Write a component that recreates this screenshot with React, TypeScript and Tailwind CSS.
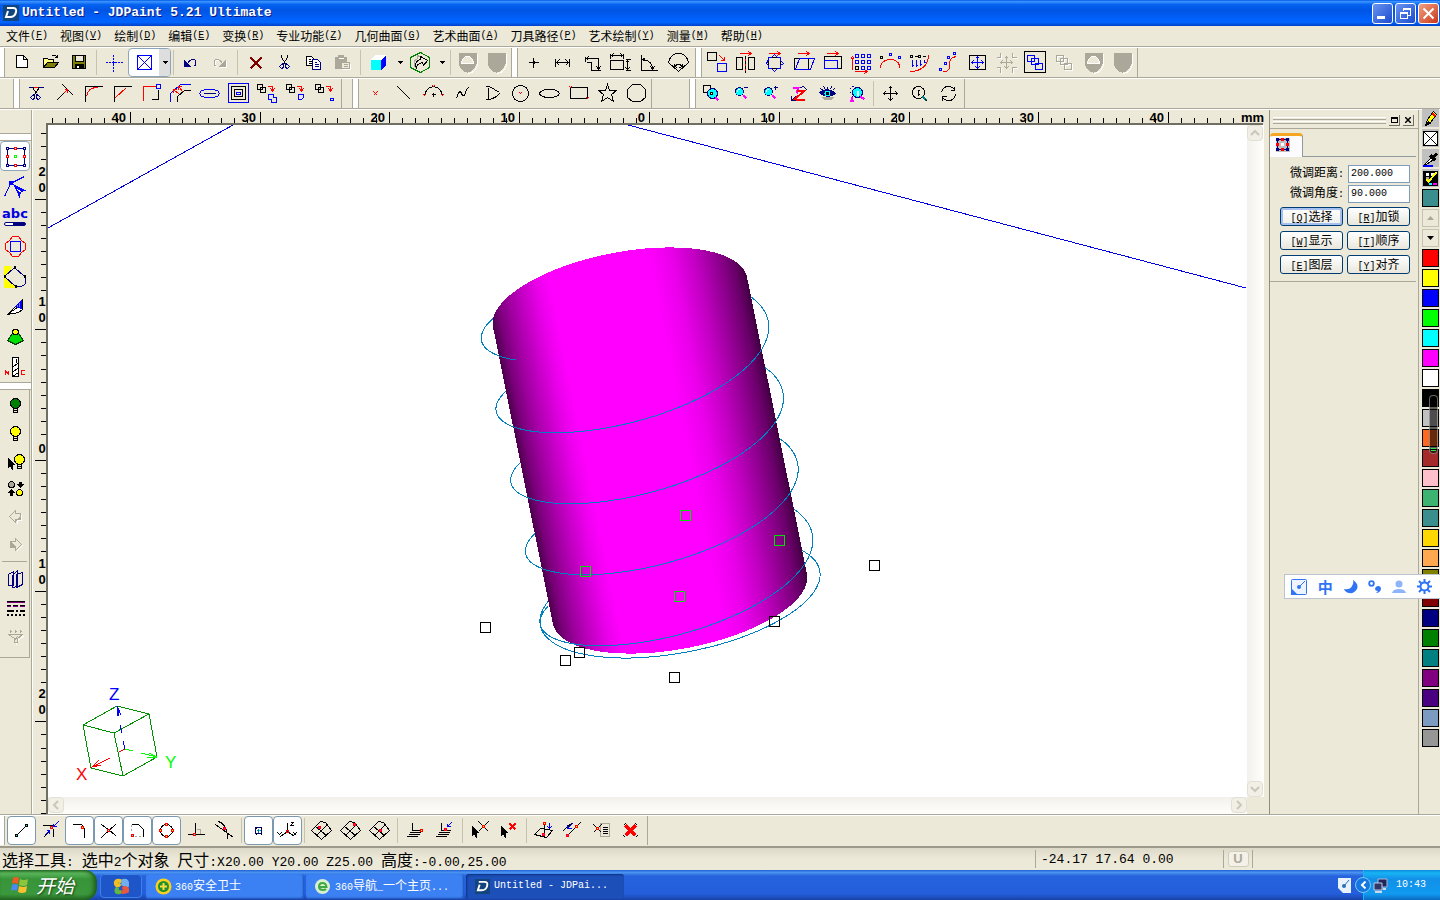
import React from 'react';

type Layer = [stroke: string, d: string, fill?: string, width?: number];

const K = '#000000';
const B = '#0000ff';
const R = '#ff0000';
const N = '#000080';
const G = '#aca899';
const C = '#00ffff';
const M = '#ff00ff';
const Y = '#ffff00';
const W = '#ffffff';
const O = 'none';

const sq = (x: number, y: number, r: number) => `M${x - r} ${y - r}h${2 * r}v${2 * r}h${-2 * r}Z`;
const box = (x1: number, y1: number, x2: number, y2: number) => `M${x1} ${y1}H${x2}V${y2}H${x1}Z`;
const ring = (x: number, y: number, r: number) => `M${x - r} ${y}a${r} ${r} 0 1 1 ${2 * r} 0a${r} ${r} 0 1 1 ${-2 * r} 0Z`;
const cross = (x: number, y: number, r: number) =>
  `M${x - r} ${y - r}L${x + r} ${y + r}M${x + r} ${y - r}L${x - r} ${y + r}`;

const shield = 'M-9 -10H9V1Q7 9 0 10Q-7 9 -9 1Z';
const topArrow = 'M-6 -9H5M3 -11L6 -9L3 -7';
const moveArrows = 'M-6 0H6M0 -6V6M-4 -2L-6 0L-4 2M4 -2L6 0L4 2M-2 -4L0 -6L2 -4M-2 4L0 6L2 4';
const mesh = 'M-10 0L-1 -9L4 -8L10 0L0 9ZM-6 -4L5 5M5 -5L-5 5';
const pairDown: Layer[] = [
  [K, box(-10, -9, -5, -4)],
  [K, box(-7, -6, -2, -1)],
  [R, 'M0 -7H5V-3M3 -5L5 -2L7 -5', undefined, 1],
];
const lens: Layer[] = [
  [N, ring(-1, -2, 4), C],
  [W, 'M-3 -2Q-3 -4 -1 -4'],
  [M, 'M3 2L6 5', undefined, 2],
];
const bulb = (c: string, x = 0): Layer[] => [
  [K, `M${x - 2} 3V8H${x + 2}V3M${x - 2} 6H${x + 2}`, '#ece9d8'],
  [K, ring(x, -1, 5), c],
];
const cursor = (x: number, y: number): Layer => [K, `M${x} ${y}V${y + 9}L${x + 2} ${y + 7}L${x + 4} ${y + 11}L${x + 4} ${y + 6}H${x + 6}Z`, K];

const icons: Record<string, Layer[]> = {
  New: [[K, 'M-5 -7H2L6 -3V5H-5ZM2 -7V-3H6', W]],
  Open: [
    [K, 'M-7 5V-4H-3L-2 -3H3V0', '#ffff80'],
    [K, 'M-7 5L-3 0H8L4 5Z', '#808000'],
    [K, 'M1 -6Q4 -9 7 -5M7 -8V-5H4'],
  ],
  Save: [
    [K, box(-7, -7, 6, 6), '#808000'],
    [K, box(-4, -7, 4, -1), '#ece9d8'],
    [K, box(-4, 2, 4, 6), K],
    [W, 'M-2 3V5M-1 3V5'],
  ],
  Origin: [[B, 'M-8 0h2M-5 0h2M-2 0h5M4 0h2M7 0h2M0 -8v2M0 -5v2M0 -2v5M0 4v2M0 7v2']],
  Frame: [[B, box(-7, -7, 7, 7) + cross(0, 0, 7)]],
  Undo: [[N, 'M-6 -2V4H0Z', N], [N, 'M-3 1Q0 -4 4 -3Q7 -1 4 4', undefined, 1]],
  Redo: [[W, 'M7 -1V5H1ZM4 2Q1 -3 -3 -2Q-6 0 -3 5'], [G, 'M6 -2V4H0Z', G], [G, 'M3 1Q0 -4 -4 -3Q-7 -1 -4 4']],
  Delete: [['#800000', 'M-5 -5L6 6M6 -5L-5 6', undefined, 2]],
  Cut: [
    [K, 'M-3 -8V-5L1 1M3 -8V-5L-1 1M0 -1V1'],
    [N, 'M-3 2L-1 1V5L-3 6L-5 4ZM1 1L3 2L5 4L3 6L1 5Z', undefined, 1],
  ],
  Copy: [
    [K, 'M-7 -6H-2L1 -3V3H-7ZM-5 -3H-3M-5 -1H-1M-5 1H-1', W],
    [N, 'M-1 -3H4L7 0V7H-1ZM1 0H3M1 2H5M1 4H5', W],
  ],
  Paste: [
    [G, box(-7, -5, 4, 6), G],
    [G, 'M-4 -7H1V-4H-4Z', G],
    [W, 'M-4 -4H1M8 1V7H0'],
    [G, box(-1, 0, 7, 6), '#ece9d8'],
    [G, 'M1 2H5M1 4H5'],
  ],
  Cube: [
    [O, 'M-7.5 -2.5L-3.5 -7.5H7.5L2.5 -2.5Z', W],
    [O, 'M2.5 -2.5L7.5 -7.5V2.5L2.5 7.5Z', B],
    [O, 'M-7.5 -2.5H2.5V7.5H-7.5Z', C],
  ],
  Down: [[O, 'M-2.5 -1.5H3.5L0.5 1.5Z', K]],
  Hexagon: [
    ['#008000', 'M0 -10L9 -5V5L0 10L-10 5V-5Z', undefined, 1],
    [G, 'M-5 6Q-9 -1 -3 -4L-3 -7L1 -5'],
    [K, 'M-4 6Q-7 -1 0 -3V-6L7 -2L3 3L2 0Q-4 1 -4 6Z', '#ece9d8'],
  ],
  ShieldHalf: [[W, 'M10 -9V2Q8 10 1 11'], [O, shield, G], [W, 'M-6 1A6 7 0 0 1 6 1Z', '#ece9d8']],
  Shield: [[W, 'M10 -9V2Q8 10 1 11'], [O, shield, G]],
  Point: [[K, 'M-5 0H5M0 -5V5'], [K, 'M-1 0H1', undefined, 3]],
  Horizontal: [[K, 'M-7 -4V4M7 -4V4M-6 0H6M-3 -3L-6 0L-3 3M3 -3L6 0L3 3']],
  Step: [[K, 'M-6 -6V-1M-5 -4H7V6M-5 0H0V8H9M-3 -6L-5 -4L-3 -2M5 4L7 7L9 4']],
  Extents: [[K, box(-10, -2, 3, 7) + 'M-10 -9V-4M3 -9V-4M-9 -7H2M-7 -9L-9 -7L-7 -5M0 -9L2 -7L0 -5M5 -3H10M5 8H10M7 -2V7M5 0L7 -2L9 0M5 5L7 7L9 5']],
  Angle: [[K, 'M-8 -8V8H8M-7 -3Q3 -2 3 7M-4 -5L-7 -3L-4 -1M1 4L3 7L5 4']],
  Radius: [[K, 'M-10 0Q-8 -9 0 -9Q8 -9 10 0L0 9ZM-4 1L-4 4L-1 5M4 1L4 4L1 5M-4 4Q0 0 4 4']],
  Shift: [[K, box(-9, -10, 0, -2)], [B, box(1, 1, 10, 9)], [R, 'M3 -7L8 -2M8 -6V-2H4']],
  Mirror: [[R, topArrow], [K, box(-9, -5, -3, 7) + box(3, -5, 9, 7)], [K, 'M0 -7v3M0 -2v3M0 3v3M0 8v2'], [R, 'M0 -4v2M0 1v2M0 6v2']],
  Rotate: [[R, topArrow], [K, box(-6, -5, 6, 6)], [B, 'M0 -8L3 -5L6 -5V-2L9 1L6 3V6H3L0 9L-3 6H-6V3L-8 1L-6 -3V-5H-3Z']],
  Skew: [[R, topArrow], [K, box(-9, -4, 5, 7)], [B, 'M-8 7L-4 -4H11L7 7Z']],
  Scale: [[R, topArrow], [K, box(-8, -6, 9, 6)], [B, box(-8, -2, 5, 6)]],
  Array: [
    [R, 'M-9 7V-5M-11 -3L-9 -6L-7 -3M-7 9H5M3 7L6 9L3 11'],
    [B, [-8, -2].map((y) => [-6, 0, 6].map((x) => box(x, y, x + 3, y + 3)).join('')).join('') + box(0, 4, 3, 7) + box(6, 4, 9, 7), undefined, 1],
    [K, box(-6, 4, -3, 7)],
  ],
  Arch: [[R, 'M-10 5V3Q-7 -3 0 -3Q7 -3 9 3V5'], [K, sq(-9, -5, 1)], [B, sq(0, -8, 1) + sq(9, -5, 1)]],
  Project: [
    [R, 'M9 -8Q9 8 -9 9'],
    [K, sq(-8, -6, 1) + sq(0, -6, 1) + 'M-5 -6h3M3 -6h3'],
    [B, 'M-7 -3V4M-3 -3V4M1 -3V3M5 -3V0M-8 3H-6M-4 3H-2M0 2H2M4 0H6'],
  ],
  Path: [[R, 'M-6 9H-3Q2 8 1 2Q1 -3 4 -5L8 -6'], [B, sq(-8, 7, 1) + sq(-3, 1, 1) + sq(0, -5, 1) + sq(6, -9, 1)]],
  Center: [[K, box(-8, -7, 8, 7)], [B, moveArrows]],
  Expand: [[W, 'M-9 -4H-5V-9M7 -9V-4H11M-9 6H-5V11M7 11V6H11'], [G, moveArrows + 'M-10 -5H-6V-10M6 -10V-5H10M-10 5H-6V10M6 10V5H10']],
  Group: [[K, box(-11, -11, 10, 10)], [B, box(-8, -7, -1, -1) + box(-4, -4, 3, 2) + box(0, 1, 7, 7), undefined, 1]],
  Ungroup: [[W, box(-7, -6, 0, 0) + box(-3, -3, 4, 3) + box(1, 2, 8, 8)], [G, box(-8, -7, -1, -1) + box(-4, -4, 3, 2) + box(0, 1, 7, 7)]],

  Trim: [[N, 'M-7 -6H8'], [K, 'M-3 -6L1 0M4 -6L-1 1'], [R, 'M-2 -6H2'], [N, 'M-3 2L-1 1V5L-3 6L-5 4ZM1 1L3 2L5 4L3 6L1 5Z']],
  Extend: [[K, 'M-8 7L-1 0M-2 -9L9 2'], [R, 'M-1 0L3 -4M0 -4H3V-1']],
  Fillet: [[K, 'M-8 8V-7H9'], [R, 'M-7 3Q-6 -6 4 -6']],
  Chamfer: [[K, 'M-8 8V-7H9'], [R, 'M-7 4L4 -6']],
  Corner: [[R, 'M-8 7V-7H4'], [K, 'M7 -4V6H0'], [B, sq(7, -7, 2)]],
  Offset: [[B, 'M-10 8V0L0 -9H10'], [K, 'M-3 8V3L4 -3H10'], [R, 'M-1 1L-7 -4M3 -1L-2 -7M-7 -1V-4H-4M-2 -4V-7H1']],
  Slot: [[B, 'M-8 -3Q0 -5 8 -3L10 0L8 3Q0 5 -8 3L-10 0Z'], [N, 'M-6 0H6']],
  Contours: [[B, box(-10, -10, 10, 9)], [K, box(-7, -7, 7, 6) + box(-4, -4, 4, 3)], [B, box(-2, -1, 2, 1)]],
  Union: [...pairDown, [B, 'M1 1H6V4H9V9H4V6H1Z']],
  Intersect: [...pairDown, [B, 'M2 1H7V4L5 6H2Z']],
  Subtract: [...pairDown, [B, box(5, 5, 8, 7)]],

  Dot: [[R, cross(0, 0, 2)]],
  Line: [[K, 'M-7 -7L6 6']],
  Arc: [[K, 'M-9 3Q-8 -6 0 -7Q8 -6 9 3M-2 1H2M0 -1V3'], [R, cross(0, -7, 1) + cross(-9, 2, 1) + cross(9, 2, 1)]],
  Curve: [[K, 'M-6 5L-4 -1L-2 -2L0 2H2L4 -4L6 -6']],
  Polyline: [[K, 'M-6 -7H-2L8 -1M8 0Q4 5 -3 6V-6M-3 6H-6']],
  Circle: [[K, ring(0, 0, 8)], [R, cross(0, 0, 1)]],
  Ellipse: [[K, 'M-10 0Q-9 -4 0 -4Q9 -4 10 0Q9 4 0 4Q-9 4 -10 0Z']],
  Rectangle: [[K, box(-8, -6, 9, 5)], [R, cross(-8, -6, 1) + cross(9, 5, 1)]],
  Star: [[K, 'M0 -9L2 -3H9L4 1L6 8L0 4L-6 8L-4 1L-9 -3H-2Z']],
  Polygon: [[K, 'M-4 -9H4L9 -4V4L4 8H-4L-9 4V-4Z']],

  ZoomWindow: [[K, box(-8, -8, -1, -1)], [N, ring(1, 0, 5), C], [K, sq(0, 0, 1), W], [M, 'M4 4L7 7', undefined, 2]],
  ZoomOut: [...lens, [N, 'M3 -6H7']],
  ZoomIn: [...lens, [N, 'M4 -6H8M6 -8V-4']],
  ZoomLast: [[M, 'M-6 -6H0L-2 0', undefined, 2], [R, 'M-2 -3H6L-4 6H6', undefined, 2], [N, 'M2 -6Q7 -8 8 -3M-7 2V7H-3M-7 7L-3 3']],
  Eye: [
    [O, 'M-7 3Q0 11 8 3Z', G],
    [N, 'M-8 -1Q0 -7 8 0Q0 6 -8 -1ZM-7 -5L-4 -3M-4 -7L-2 -4M0 -7V-4M4 -7L3 -4M7 -5L5 -3', N],
    [O, ring(0, 0, 3), C],
    [K, sq(0, 0, 1), N],
  ],
  ZoomFit: [[N, 'M-7 -5h1M-7 -1h1M-5 3h1M-5 -7h2'], [N, ring(1, -1, 5), C], [W, 'M1 -3V2', undefined, 2], [M, 'M4 3L8 6M-5 3V7M-7 7H-3', undefined, 2]],
  Pan: [[K, 'M-7 0H7M0 -7V7M-5 -2L-7 0L-5 2M5 -2L7 0L5 2M-2 -5L0 -7L2 -5M-2 5L0 7L2 5', undefined, 1]],
  ZoomDynamic: [[K, ring(-1, -1, 6) + 'M-1 -4V2M-2 -3H0M-2 1H0'], ['#008080', 'M3 3L7 7', undefined, 2], [K, 'M6 6L8 8']],
  Orbit: [[K, 'M-7 -1Q-6 -7 0 -7Q4 -7 6 -4M6 -7V-3H2M7 1Q6 7 0 7Q-4 7 -6 4M-6 7V3H-2']],

  Select: [[N, box(-8, -8, 9, 9)], [N, sq(-8, -8, 1) + sq(9, -8, 1) + sq(-8, 9, 1) + sq(9, 9, 1), W], [R, sq(0, -8, 1) + sq(0, 9, 1) + sq(-8, 0, 1) + sq(9, 0, 1), W], ['#00ff00', sq(0, 0, 1)]],
  Node: [[B, 'M-11 10L-5 -3L9 -10'], [B, 'M-7 -4H-3', undefined, 4], [B, 'M-1 -1L9 4L5 5L4 10Z', B], [W, 'M2 3L6 6']],
  Shape: [[R, 'M-3 -10H3L6 -6L10 -3V3L6 6L3 10H-3L-6 6L-10 3V-3L-6 -6Z'], [B, box(-5, -5, 5, 5)]],
  Region: [[O, 'M-12 -11H-5V-6L0 -10L2 4L3 11H-12Z', Y], [N, 'M-1 -9L-11 0L0 10H6Q13 7 9 0Z', '#ece9d8'], [K, 'M-2 -9H0M-12 0H-10M-1 10H1M8 0H10', undefined, 3]],
  Knife: [[K, 'M-8 8L0 0L7 -7V3L3 6ZM-8 8L3 0', W], [B, 'M0 0L6 -6V2ZM3 -3V1M5 -5V1', '#8080ff']],
  Relief: [['#004000', 'M-3 -3L-8 4L0 8L8 4L3 -3Z', '#00e000'], [K, 'M-3 -6Q0 -8 3 -6V-3Q0 -1 -3 -3Z', Y]],
  Drill: [[K, 'M-3 -9H3V10H-3Z', W], [K, 'M-3 1L3 -4M-3 6L3 1M-3 10L3 6M1 -8V-4', undefined, 1], [R, 'M-10 8V4L-7 8V4M9 4H6V8H9']],

  BulbGreen: bulb('#008000'),
  BulbYellow: bulb(Y),
  BulbPick: [...bulb(Y, 4), cursor(-7, -2)],
  BulbSwap: [[K, ring(-4, -4, 3), G], [K, ring(4, 4, 3), Y], [K, 'M5 -7V-3M-4 7V4', undefined, 3], [K, 'M2 -4H8L5 -1ZM-7 4H-1L-4 1Z', K]],
  Back: [[W, 'M1 7L-5 1M6 -2V4H2V7'], [G, 'M0 -6V-3H5V3H0V6L-6 0Z', '#ece9d8'], [G, 'M0 3H5V0L0 5Z', G]],
  Forward: [[W, 'M1 7L7 1'], [G, 'M0 -6V-3H-5V3H0V6L6 0Z', '#ece9d8'], [G, 'M-4 -2L0 2V5L-1 2H-4Z', G]],
  Layers: [[N, 'M-7 6V-5L-2 -8V6ZM-3 8V-4L2 -9V7ZM1 8V-5L7 -7V5Z', '#ece9d8']],
  LineStyle: [[K, 'M-9 -6H9M-9 -2h4M-3 -2h5M4 -2h5M-9 3h7M0 3h2M4 3h5M-9 7h2M-5 7h2M-1 7h2M3 7h2M7 7h2', undefined, 2], ['#800080', 'M-9 -5H9M-9 -1h4M-3 -1h5M4 -1h5']],
  Filter: [[W, 'M9 0L1 6V9'], [G, 'M-7 -1H7L2 3V7H-1V3Z', '#ece9d8'], [G, 'M-5 -6V-3M0 -6V-3M5 -6V-3M-6 -4H-4M-1 -4H1M4 -4H6M2 1L-1 5', undefined, 1]],

  SnapEnd: [[K, 'M-5 5L5 -5'], [K, sq(5, -5, 1) + sq(-5, 5, 1), C]],
  SnapNear: [[K, 'M-8 -5H2Q3 -1 3 6M-7 7L-1 1'], [B, 'M8 -9L3 -4M3 -7V-4H6M-6 5L-1 0M-4 0H-1V3'], [R, sq(1, -3, 1), C]],
  SnapVertex: [[K, 'M-7 -6H2L5 -2V7'], [R, sq(3, -3, 1), Y]],
  SnapCross: [[K, 'M-7 -6Q2 0 8 6M8 -7L-7 7'], [R, sq(0, 0, 1), C]],
  SnapArc: [[G, 'M-6 -6v2M-6 -2v2M-3 6h2M1 6h2'], [K, 'M-6 -6H1L6 -1V6'], [R, sq(-5, 5, 1), C]],
  SnapQuad: [[K, ring(0, 0, 6)], [R, sq(0, -6, 1) + sq(0, 6, 1) + sq(-6, 0, 1) + sq(6, 0, 1), Y]],
  SnapPerp: [[G, 'M1 -1H5V4'], [K, 'M0 -8V4M-8 4H9'], [R, sq(-1, 4, 1), C]],
  SnapTangent: [[K, 'M-9 -6L9 7M-6 -9Q3 -6 3 8'], [R, sq(0, -2, 1), M]],
  SnapObject: [[N, box(-3, -3, 3, 3), W], [K, 'M-3 -3H-2M2 -3H3M-3 3H-2M2 3H3', undefined, 2], ['#008080', 'M-2 0H2M0 -2V2', undefined, 1], [C, 'M0 0H1', undefined, 1]],
  SnapAxis: [[K, 'M0 -8V1L-7 6M0 1L7 6M3 -8H6L3 -5H6M-10 2L-8 4L-6 2M6 2L9 5M9 2L6 5'], [R, sq(0, 1, 1)]],
  MeshA: [[K, mesh], [R, sq(-2, -3, 1), M]],
  MeshB: [[K, mesh], [R, sq(4, -6, 1), M]],
  MeshC: [[K, mesh], [R, sq(1, 0, 1), M]],
  PlaneA: [[K, 'M-3 -8V0H5M-6 2H5M-7 4H4M-9 6H2', undefined, 1], [R, sq(6, 0, 1), Y]],
  PlaneB: [[K, 'M-3 -8V0H6M-6 2H5M-7 4H4M-9 6H2'], [B, 'M7 -8L3 -4M3 -7V-4H6'], [R, sq(1, -1, 1), M]],
  PickPoint: [cursor(-8, -4), [K, cross(3, -4, 5)], [R, sq(3, -4, 1), Y]],
  PickClear: [cursor(-8, -4), [R, cross(3, -4, 3), undefined, 2]],
  DropPlane: [[K, 'M-9 4L-3 -2L9 0L3 7ZM1 -6V4'], [B, 'M6 -8V-2M4 -4L6 -2L8 -4'], [R, sq(1, -7, 1), Y], [R, sq(0, 4, 1), M]],
  DropLine: [[K, 'M8 -8L-5 5M-9 0L0 -8'], [B, 'M0 -7L-5 -2M-5 -6V-2H-1'], [R, sq(4, -4, 1), Y], [R, sq(-5, 5, 1), M]],
  PointList: [[G, box(-1, -7, 8, 6)], [K, cross(-4, -2, 4) + 'M1 -3H6M1 -1H6M1 1H6M1 3H6'], [R, sq(-4, -2, 1), Y]],
  ClearAll: [[R, cross(0, 0, 5), undefined, 4], [K, 'M-7 -5L-5 -7M5 -7L7 -5M-7 5L-5 7M5 7L7 5']],

  Pencil: [[K, 'M-5 7L-3 1L3 -7L6 -4L0 4Z', Y], [K, 'M-5 7L-2 3L0 5Z', K], [R, 'M2 -5L5 -2', undefined, 2]],
  Dropper: [[B, 'M-8 7H2', undefined, 2], [K, 'M-6 6L1 -1L3 1L-4 6Z', W], [K, 'M0 -3L5 2M3 -1L6 -5', undefined, 3]],
  Mix: [
    [K, box(-7, -7, 7, 7), K],
    [W, 'M-5 -4H-2M0 -4H3', undefined, 3],
    [G, 'M-5 0H-2', undefined, 3],
    [M, 'M2 5H6', undefined, 2],
    [C, 'M-2 5H1', undefined, 2],
    [Y, 'M-4 1L-2 3L6 -6', undefined, 2],
  ],
  None: [[K, box(-7, -7, 7, 7) + cross(0, 0, 7), W]],
  TabIcon: [
    [O, box(-7, -7, 7, 7), '#c0c0c0'],
    [N, box(-5, -5, 5, 5), undefined, 1],
    [N, 'M-6.5 -5H-3.5M3.5 -5H6.5M-6.5 5H-3.5M3.5 5H6.5', undefined, 3],
    [R, 'M-1.5 -5H1.5M-1.5 5H1.5M-6.5 0H-3.5M3.5 0H6.5', undefined, 3],
    [W, 'M-1.5 0H1.5', undefined, 3],
  ],
};

function Icon({ name, size = 29 }: { name: string; size?: number }) {
  const h = size / 2;
  return (
    <svg width={size} height={size} viewBox={`${-h} ${-h} ${size} ${size}`} shapeRendering="crispEdges" className="block shrink-0" aria-hidden="true">
      {icons[name].map(([s, d, f, w], i) => (
        <path key={i} d={d} stroke={s} fill={f ?? 'none'} strokeWidth={w ?? 1} />
      ))}
    </svg>
  );
}

function Tool({ name, on }: { name: string; on?: boolean }) {
  return (
    <button
      type="button"
      aria-label={name}
      className={
        on
          ? 'flex w-[29px] shrink-0 items-center justify-center overflow-hidden rounded-sm border border-[#7a98af] bg-white'
          : 'flex w-[29px] shrink-0 items-center justify-center overflow-hidden'
      }
    >
      <Icon name={name} />
    </button>
  );
}

const Tools = ({ names, on = [] }: { names: string[]; on?: string[] }) => (
  <>
    {names.map((n) => (
      <Tool key={n} name={n} on={on.includes(n)} />
    ))}
  </>
);

const Sep = ({ wide }: { wide?: boolean }) => (
  <span className={wide ? 'mx-[3px] my-0.5 w-px shrink-0 bg-[#c5c2b0]' : 'mx-0.5 my-0.5 w-px shrink-0 bg-[#c5c2b0]'} />
);
const Grip = () => <span className="w-1.5 shrink-0 border-r border-[#aca899] bg-white" />;
const DownArrow = () => (
  <button type="button" aria-label="More" className="flex w-[13px] shrink-0 items-center justify-center">
    <Icon name="Down" size={9} />
  </button>
);

function Mixed({ text, latin }: { text: string; latin: string }) {
  return (
    <>
      {text.split(/([\x20-\x7e]+)/).map((part, i) =>
        i % 2 ? (
          <span key={i} className={latin}>
            {part}
          </span>
        ) : (
          part
        ),
      )}
    </>
  );
}

const small = "font-['Liberation_Mono',monospace] text-[10px] whitespace-pre";
const large = "font-['Liberation_Mono',monospace] text-[13px] whitespace-pre";

const menus: [string, string][] = [
  ['文件', 'F'], ['视图', 'V'], ['绘制', 'D'], ['编辑', 'E'], ['变换', 'R'], ['专业功能', 'Z'],
  ['几何曲面', 'G'], ['艺术曲面', 'A'], ['刀具路径', 'P'], ['艺术绘制', 'Y'], ['测量', 'M'], ['帮助', 'H'],
];

function TitleBar() {
  const btn = 'flex h-[21px] w-[21px] items-center justify-center rounded-[3px] border border-white bg-gradient-to-br';
  return (
    <header className="flex h-[26px] shrink-0 items-center bg-[linear-gradient(#0058e6,#3a93ff_6%,#0562f0_18%,#0054e3_40%,#0060fa_70%,#0066ff_85%,#0040c8)] pr-px pl-[3px]">
      <svg width="16" height="16" viewBox="0 0 16 16" aria-hidden="true">
        <rect width="16" height="16" fill="#12447e" />
        <path d="M4 3H10Q14 3 13 7Q12 12 7 12H3L5 6" fill="none" stroke="#fff" strokeWidth="2" />
      </svg>
      <h1 className="ml-[3px] flex-1 font-['Liberation_Mono',monospace] text-[13px] leading-4 font-bold text-white [text-shadow:1px_1px_#0a1883]">
        Untitled - JDPaint 5.21 Ultimate
      </h1>
      <div className="flex gap-0.5">
        <button type="button" aria-label="Minimize" className={`${btn} from-[#6a93f0] to-[#1d49cf]`}>
          <span className="mt-2 mr-1 h-[3px] w-2 bg-white" />
        </button>
        <button type="button" aria-label="Restore" className={`${btn} from-[#6a93f0] to-[#1d49cf]`}>
          <svg width="13" height="13" viewBox="0 0 13 13" fill="none" stroke="#fff" shapeRendering="crispEdges">
            <path d="M4.500 4V2.500H11.500V8.500H9M4 1.500H12M1.500 5.500H8.500V11.500H1.500ZM1 6.500H9" />
          </svg>
        </button>
        <button type="button" aria-label="Close" className={`${btn} from-[#f0a080] to-[#c83010]`}>
          <svg width="13" height="13" viewBox="0 0 13 13" stroke="#fff" strokeWidth="2">
            <path d="M1.500 1.500L11.500 11.500M11.500 1.500L1.500 11.500" />
          </svg>
        </button>
      </div>
    </header>
  );
}

function TopBars() {
  const row = 'flex h-[31px] shrink-0 items-stretch border-t border-[#aca899] shadow-[inset_0_1px_#fff] pt-px';
  const end = 'flex border-r border-[#aca899]';
  return (
    <>
      <nav className="flex h-5 shrink-0 items-center gap-3 pl-1.5">
        {menus.map(([label, key]) => (
          <button type="button" key={key} className="flex items-center leading-4">
            {label}
            <span className={small}>
              (<u>{key}</u>)
            </span>
          </button>
        ))}
      </nav>
      <div className={row}>
        <div className={`${end} w-[512px]`}>
          <span className="mr-0.5 w-[5px] shrink-0 border-r border-[#aca899] bg-white" />
          <Tools names={['New', 'Open', 'Save']} />
          <Sep />
          <Tools names={['Origin']} />
          <div className="flex w-[43px] shrink-0 items-stretch overflow-hidden rounded border border-[#8ba6ba] bg-white">
            <button type="button" aria-label="Frame" className="flex w-[30px] shrink-0 items-center justify-center overflow-hidden">
              <Icon name="Frame" />
            </button>
            <button type="button" aria-label="Frame options" className="flex flex-1 items-center justify-center bg-[#dedede]">
              <Icon name="Down" size={9} />
            </button>
          </div>
          <Sep />
          <Tools names={['Undo', 'Redo']} />
          <Sep wide />
          <Tools names={['Delete', 'Cut', 'Copy', 'Paste']} />
          <Sep wide />
          <Tools names={['Cube']} />
          <DownArrow />
          <Tools names={['Hexagon']} />
          <DownArrow />
          <Sep />
          <Tools names={['ShieldHalf', 'Shield']} />
        </div>
        <Grip />
        <div className={`${end} pr-0.5 pl-px`}>
          <Tools names={['Point', 'Horizontal', 'Step', 'Extents', 'Angle', 'Radius']} />
        </div>
        <Grip />
        <div className={end}>
          <Tools names={['Shift', 'Mirror', 'Rotate', 'Skew', 'Scale', 'Array', 'Arch', 'Project', 'Path', 'Center', 'Expand', 'Group', 'Ungroup', 'ShieldHalf', 'Shield']} />
        </div>
      </div>
      <div className={row}>
        <span className="w-3.5 border-r border-[#aca899]" />
        <Grip />
        <div className={`${end} w-[322px] pl-px`}>
          <Tools names={['Trim', 'Extend', 'Fillet', 'Chamfer', 'Corner', 'Offset', 'Slot', 'Contours', 'Union', 'Intersect', 'Subtract']} />
        </div>
        <span className="w-[11px] border-r border-[#aca899]" />
        <Grip />
        <div className={`${end} pl-0.5`}>
          <Tools names={['Dot', 'Line', 'Arc', 'Curve', 'Polyline', 'Circle', 'Ellipse', 'Rectangle', 'Star', 'Polygon']} />
        </div>
        <span className="w-[38px] border-r border-[#aca899]" />
        <Grip />
        <div className={`${end} pr-px pl-px`}>
          <Tools names={['ZoomWindow', 'ZoomOut', 'ZoomIn', 'ZoomLast', 'Eye', 'ZoomFit']} />
          <Sep />
          <Tools names={['Pan', 'ZoomDynamic', 'Orbit']} />
        </div>
      </div>
    </>
  );
}

function LeftBar() {
  const item = 'flex w-[30px] items-center justify-center overflow-hidden';
  return (
    <aside className="flex w-8 shrink-0 flex-col border-r border-[#aca899]">
      <span className="h-[23px] shrink-0" />
      <span className="h-2 shrink-0 border-y border-[#aca899] bg-white" />
      <div className="flex flex-col pb-px">
        <button type="button" aria-label="Select" className={`${item} h-[30px] rounded-sm border border-[#8ba6ba] bg-white`}>
          <Icon name="Select" />
        </button>
        <button type="button" aria-label="Node" className={`${item} h-[30px]`}><Icon name="Node" /></button>
        <button type="button" aria-label="Text" className={`${item} h-[30px] flex-col`}>
          <span className="mt-0.5 font-['DejaVu_Sans',sans-serif] text-[13px] leading-3 font-bold text-[#0000e0]">abc</span>
          <span className="mt-0.5 h-1 w-[22px] rounded-sm border border-[#000080] bg-[linear-gradient(90deg,#fff_40%,#000080_40%)]" />
        </button>
        {['Shape', 'Region', 'Knife', 'Relief', 'Drill'].map((n) => (
          <button type="button" aria-label={n} key={n} className={`${item} h-[30px]`}><Icon name={n} /></button>
        ))}
      </div>
      <span className="h-2 shrink-0 border-y border-[#aca899] bg-white" />
      <div className="flex w-[30px] flex-col border-r border-b border-[#aca899] pb-2">
        {['BulbGreen', 'BulbYellow', 'BulbPick', 'BulbSwap', 'Back', 'Forward'].map((n) => (
          <button type="button" aria-label={n} key={n} className={`${item} h-7`}><Icon name={n} size={27} /></button>
        ))}
        <span className="mx-0.5 my-[3px] h-px bg-[#aca899]" />
        {['Layers', 'LineStyle', 'Filter'].map((n) => (
          <button type="button" aria-label={n} key={n} className={`${item} h-7`}><Icon name={n} size={27} /></button>
        ))}
      </div>
    </aside>
  );
}

const rulerText = "font-['Liberation_Sans',sans-serif] text-[13px] font-bold";

function TopRuler() {
  const ticks = Array.from({ length: 92 }, (_, i) => i - 46);
  return (
    <svg className="block h-[15px] w-full" aria-label="Horizontal ruler">
      <g transform="translate(-33 -110)" shapeRendering="crispEdges">
        {ticks.map((t) => {
          const x = Math.round(649 + t * 12.98) + 0.5;
          return <path key={t} d={`M${x} ${t % 10 ? 118 : 112}V123`} stroke="#000" />;
        })}
        {[-40, -30, -20, -10, 0, 10, 20, 30, 40].map((t) => (
          <text key={t} x={Math.round(645 + t * 12.98)} y="122" textAnchor="end" className={rulerText}>
            {Math.abs(t)}
          </text>
        ))}
        <text x="1241" y="122" className={rulerText}>mm</text>
        <path d="M46 124H1263" stroke="#716f64" strokeWidth="2" />
      </g>
    </svg>
  );
}

function LeftRuler() {
  const ticks = Array.from({ length: 53 }, (_, i) => i - 25);
  return (
    <svg className="block h-full w-[15px] shrink-0" aria-label="Vertical ruler">
      <g transform="translate(-33 -125)" shapeRendering="crispEdges">
        {ticks.map((t) => {
          const y = Math.round(460 + t * 13.07) + 0.5;
          return <path key={t} d={`M${t % 10 ? 41 : 35} ${y}H46`} stroke="#000" />;
        })}
        {[-20, -10, 0, 10, 20].map((t) =>
          String(Math.abs(t)).split('').map((ch, i, all) => (
            <g key={`${t}-${i}`} transform={`translate(42 ${Math.round(453 + t * 13.07) - (all.length - 1 - i) * 16})`}>
              <rect x="-4" y="-10" width="8" height="11" fill="#ece9d8" />
              <text textAnchor="middle" className={rulerText}>{ch}</text>
            </g>
          )),
        )}
        <path d="M47 123V814" stroke="#716f64" strokeWidth="2" />
      </g>
    </svg>
  );
}

type Pt = [number, number];

const orbit = (cx: number, cy: number, r: number, t: number): Pt => [
  cx + r * (127 * Math.cos(t) + 9.5 * Math.sin(t)),
  cy + r * (-25 * Math.cos(t) + 48.5 * Math.sin(t)),
];

const trace = (f: (t: number) => Pt, from: number, to: number, steps = 80) =>
  Array.from({ length: steps + 1 }, (_, i) => f(from + ((to - from) * i) / steps))
    .map(([x, y]) => `${x.toFixed(1)} ${y.toFixed(1)}`)
    .join('L');

const helix = (t: number): Pt => {
  const turns = t / (2 * Math.PI);
  return orbit(628.5 + 14.7 * turns, 348.5 + 71 * turns, 1.1, t);
};

const P = Math.PI;
const cylinder = `M${trace((t) => orbit(620, 302, 1, t), P, 2 * P)}L${trace((t) => orbit(680, 599, 1, t), 0, P)}Z`;
const coil = `M${trace(helix, -3.8, 7 * P + 0.4, 500)}`;
const fronts = [`M${trace(helix, -3.8, -P)}`, ...[0, 2, 4, 6].map((k) => `M${trace(helix, k * P, (k + 1) * P)}`)].join('');
const baseCircle = `M${trace((t) => orbit(680, 598, 1.1, t), 0, 2 * P, 160)}Z`;

const blackHandles: Pt[] = [[485, 627], [565, 660], [579, 652], [674, 677], [774, 621], [874, 565]];
const greenHandles: Pt[] = [[685, 515], [779, 540], [585, 571], [679, 596]];

function Scene() {
  const label = "font-['Liberation_Sans_Narrow','Liberation_Sans',sans-serif] text-[17px]";
  return (
    <svg className="block h-full w-full bg-white" aria-label="Drawing">
      <defs>
        <linearGradient id="shade" gradientUnits="userSpaceOnUse" x1="493" y1="323" x2="746" y2="272">
          <stop offset="0" stopColor="#500050" />
          <stop offset=".03" stopColor="#780078" />
          <stop offset=".08" stopColor="#a000a0" />
          <stop offset=".14" stopColor="#c800c8" />
          <stop offset=".2" stopColor="#ec00ec" />
          <stop offset=".25" stopColor="#ff00ff" />
          <stop offset=".64" stopColor="#ff00ff" />
          <stop offset=".73" stopColor="#ea00ea" />
          <stop offset=".82" stopColor="#c000c0" />
          <stop offset=".9" stopColor="#900090" />
          <stop offset=".96" stopColor="#680068" />
          <stop offset="1" stopColor="#400040" />
        </linearGradient>
      </defs>
      <g transform="translate(-48 -125)" shapeRendering="crispEdges" fill="none">
        <path d="M233 125L48 228M628 125L1246 288" stroke="#0000e0" />
        <path d={coil + baseCircle} stroke="#0080c0" />
        <path d={cylinder} fill="url(#shade)" />
        <path d={fronts} stroke="#0080c0" />
        {greenHandles.map(([x, y]) => (
          <rect key={x} x={x - 4.5} y={y - 4.5} width="10" height="10" stroke="#00e000" />
        ))}
        {blackHandles.map(([x, y]) => (
          <rect key={x} x={x - 4.5} y={y - 4.5} width="10" height="10" stroke="#000" />
        ))}
        <path d="M83 725L117 706L149 714L114 733ZM83 725L91 768L123 776L157 757L149 714M114 733L123 776" stroke="#009000" />
        <path d="M125 749L119 752M110 758L92 767M99 760L92 767L101 765" stroke="#ff0000" />
        <path d="M125 749L133 751M141 753L157 757M149 753L157 757L147 758" stroke="#00ff00" />
        <path d="M125 749L123 741M122 733L120 725M119 716L117 706M117 716V706L121 715" stroke="#0000ff" />
        <text x="109" y="700" fill="#0000ff" className={label}>Z</text>
        <text x="76" y="780" fill="#ff0000" className={label}>X</text>
        <text x="165" y="768" fill="#00ff00" className={label}>Y</text>
      </g>
    </svg>
  );
}

function ScrollButton({ label, d }: { label: string; d: string }) {
  return (
    <button type="button" aria-label={label} className="flex h-4 w-4 shrink-0 items-center justify-center rounded-sm border border-[#e2e0d4] bg-[#f1efe6]">
      <svg width="10" height="10" viewBox="0 0 10 10" fill="none" stroke="#c9c7ba" strokeWidth="2">
        <path d={d} />
      </svg>
    </button>
  );
}

function Viewport() {
  return (
    <section className="flex min-w-0 flex-1 flex-col">
      <TopRuler />
      <div className="flex min-h-0 flex-1">
        <LeftRuler />
        <div className="flex min-w-0 flex-1 flex-col">
          <div className="flex min-h-0 flex-1">
            <div className="min-w-0 flex-1 overflow-hidden">
              <Scene />
            </div>
            <div className="flex w-[17px] shrink-0 flex-col justify-between bg-gradient-to-r from-[#f3f1ec] to-[#fefefb]">
              <ScrollButton label="Scroll up" d="M1 7L5 3L9 7" />
              <ScrollButton label="Scroll down" d="M1 3L5 7L9 3" />
            </div>
          </div>
          <div className="flex h-[17px] shrink-0">
            <div className="flex flex-1 justify-between bg-gradient-to-b from-[#f3f1ec] to-[#fefefb]">
              <ScrollButton label="Scroll left" d="M7 1L3 5L7 9" />
              <ScrollButton label="Scroll right" d="M3 1L7 5L3 9" />
            </div>
            <span className="w-[17px]" />
          </div>
        </div>
      </div>
    </section>
  );
}

const actions = ['[Q]选择', '[R]加锁', '[W]显示', '[T]顺序', '[E]图层', '[Y]对齐'];

function SidePanel() {
  const field = "h-[18px] w-[62px] border border-[#7f9db9] bg-white pl-0.5 font-['Liberation_Mono',monospace] text-[10px] leading-4";
  return (
    <aside className="ml-[5px] flex w-[150px] shrink-0 flex-col border-r border-l border-[#aca899] border-l-[#8f8d80]">
      <div className="flex h-[19px] shrink-0 items-center gap-[3px] border-b border-[#aca899] pr-1 pl-[3px]">
        <span className="mt-0.5 flex h-[7px] flex-1 flex-col justify-between">
          <i className="h-[3px] border-t border-b border-t-white border-b-[#aca899]" />
          <i className="h-[3px] border-t border-b border-t-white border-b-[#aca899]" />
        </span>
        <button type="button" aria-label="Float" className="mt-0.5 flex h-[11px] w-[11px] items-center justify-center border-r border-b border-[#716f64]">
          <span className="h-1.5 w-[7px] border border-t-2 border-black" />
        </button>
        <button type="button" aria-label="Close panel" className="mt-0.5 flex h-[11px] w-[11px] items-center justify-center border-r border-b border-[#716f64]">
          <svg width="6" height="6" viewBox="0 0 6 6" stroke="#000" strokeWidth="1.500"><path d="M0 0L6 6M6 0L0 6" /></svg>
        </button>
      </div>
      <div className="mt-1 flex h-6 shrink-0 items-stretch">
        <button type="button" aria-label="Transform" className="flex w-[33px] items-center justify-center overflow-hidden rounded-t-sm border-t-[3px] border-r border-t-[#f5a623] border-r-[#919b9c] bg-[#fcfcfe] pr-2 pb-1">
          <Icon name="TabIcon" size={15} />
        </button>
        <span className="mr-0.5 flex-1 border-b border-[#919b9c]" />
      </div>
      <div className="mr-0.5 border-b border-[#aca899] pt-[7px] pr-1.5 pb-[7px] pl-2.5">
        <div className="flex flex-col gap-px">
          <div className="flex items-center justify-end gap-1">
            <label htmlFor="distance" className="leading-4">微调距离<span className={small}>:</span></label>
            <input id="distance" defaultValue="200.000" className={field} />
          </div>
          <div className="flex items-center justify-end gap-1">
            <label htmlFor="angle" className="leading-4">微调角度<span className={small}>:</span></label>
            <input id="angle" defaultValue="90.000" className={field} />
          </div>
        </div>
        <div className="mt-1 grid grid-cols-2 gap-x-1 gap-y-[5px]">
          {actions.map((a, i) => (
            <button
              type="button"
              key={a}
              className={
                i === 0
                  ? 'h-[19px] rounded-[3px] border border-[#003c74] bg-gradient-to-b from-white to-[#f0efe8] text-center leading-4 shadow-[inset_0_0_0_2px_#a6c0f0]'
                  : 'h-[19px] rounded-[3px] border border-[#003c74] bg-gradient-to-b from-white to-[#e9e7dc] text-center leading-4'
              }
            >
              <span className={small}>[<u>{a[1]}</u>]</span>
              {a.slice(3)}
            </button>
          ))}
        </div>
      </div>
    </aside>
  );
}

const swatches = [
  '#ff0000', '#ffff00', '#0000ff', '#00ff00', '#00ffff', '#ff00ff', '#ffffff', '#000000', '#c0c0c0', '#ff6820',
  '#a52a2a', '#ffc0cb', '#3cb371', '#3a8e8e', '#ffd700', '#ffa850', '#808000', '#800000', '#000080', '#008000',
  '#008080', '#800080', '#4b0082', '#7b9bc0', '#969696',
];

function Palette() {
  const cell = 'flex h-[18px] w-[17px] shrink-0 items-center justify-center overflow-hidden';
  return (
    <aside className="-mt-px ml-[3px] flex w-[18px] shrink-0 flex-col gap-0.5">
      {['Pencil', 'None', 'Dropper', 'Mix'].map((n) => (
        <button type="button" aria-label={n} key={n} className={`${cell} bg-[#c0c0c0]`}>
          <Icon name={n} size={17} />
        </button>
      ))}
      <span className={`${cell} border border-black bg-[#3a8e8e]`} />
      <button type="button" aria-label="Previous colours" className={`${cell} border border-[#c5c2b0]`}>
        <svg width="7" height="4" viewBox="0 0 7 4"><path d="M0 4L3.500 0L7 4Z" fill="#aca899" /></svg>
      </button>
      <button type="button" aria-label="Next colours" className={`${cell} border border-[#c5c2b0]`}>
        <svg width="7" height="4" viewBox="0 0 7 4"><path d="M0 0L3.500 4L7 0Z" fill="#000" /></svg>
      </button>
      {swatches.map((c) => (
        <button type="button" aria-label={c} key={c} className={`${cell} border border-black`} style={{ backgroundColor: c }} />
      ))}
    </aside>
  );
}

function SnapBar() {
  return (
    <div className="flex h-8 shrink-0 border-t border-[#aca899] py-px shadow-[inset_0_1px_#fff]">
      <div className="flex border-r border-[#aca899] pr-0.5">
        <span className="mr-0.5 w-[5px] border-r border-[#aca899] bg-white" />
        <Tools
          names={['SnapEnd', 'SnapNear', 'SnapVertex', 'SnapCross', 'SnapArc', 'SnapQuad', 'SnapPerp', 'SnapTangent']}
          on={['SnapEnd', 'SnapVertex', 'SnapCross', 'SnapArc', 'SnapQuad']}
        />
        <Sep />
        <Tools names={['SnapObject', 'SnapAxis']} on={['SnapObject', 'SnapAxis']} />
        <Sep />
        <Tools names={['MeshA', 'MeshB', 'MeshC']} />
        <Sep wide />
        <Tools names={['PlaneA', 'PlaneB']} />
        <Sep wide />
        <Tools names={['PickPoint', 'PickClear']} />
        <Sep />
        <Tools names={['DropPlane', 'DropLine', 'PointList', 'ClearAll']} />
      </div>
    </div>
  );
}

function StatusBar() {
  const bar = 'my-0.5 w-px shrink-0 bg-[#aca899]';
  return (
    <footer className="flex h-6 shrink-0 items-stretch border-t-2 border-[#9d9a8b] bg-gradient-to-b from-[#dcd9c8] via-[#ece9d8] to-[#ece9d8] text-[16px] leading-[22px]">
      <p className="min-w-0 flex-1 overflow-hidden pl-0.5 whitespace-nowrap">
        <Mixed text="选择工具: 选中2个对象 尺寸:X20.00 Y20.00 Z25.00 高度:-0.00,25.00" latin={large} />
      </p>
      <span className={bar} />
      <p className={`w-[187px] pl-[5px] leading-6 ${large}`}>-24.17 17.64 0.00</p>
      <span className={bar} />
      <div className="flex w-7 items-center justify-center">
        <span className="flex h-4 w-[21px] items-center justify-center rounded-[3px] border border-[#d0cdbb] bg-[#f3f1e8] font-['Liberation_Sans',sans-serif] text-[13px] font-bold text-[#aca899]">U</span>
      </div>
      <span className={bar} />
      <span className="w-[187px]" />
    </footer>
  );
}

const AppLogo = () => (
  <svg width="15" height="15" viewBox="0 0 16 16" aria-hidden="true">
    <rect width="16" height="16" fill="#12447e" />
    <path d="M4 3H10Q14 3 13 7Q12 12 7 12H3L5 6" fill="none" stroke="#fff" strokeWidth="2" />
  </svg>
);

function Taskbar() {
  const task = 'flex h-[25px] w-[158px] items-center rounded-[3px] pl-[9px] text-white';
  return (
    <footer className="flex h-[30px] shrink-0 items-stretch bg-[linear-gradient(#1f5fd8,#4a94f0_8%,#2663dd_20%,#245edb_80%,#1941a5)] text-white">
      <button type="button" className="flex w-[97px] items-center rounded-r-xl bg-[linear-gradient(#2f7a2f,#5cb85c_10%,#389438_30%,#3c983c_80%,#256b25)] pl-2.5 shadow-[inset_-3px_0_4px_#1d5a1d]">
        <svg width="20" height="18" viewBox="0 0 20 18" aria-hidden="true">
          <path d="M3 2Q6 0 9 2L8 8Q5 6 2 8Z" fill="#f15a24" />
          <path d="M10 3Q14 5 18 3L17 9Q13 11 9 9Z" fill="#8cc63f" />
          <path d="M2 9Q5 7 8 9L7 15Q4 13 1 15Z" fill="#4a8af4" />
          <path d="M9 10Q13 12 17 10L16 16Q12 18 8 16Z" fill="#fbc02d" />
        </svg>
        <span className="ml-1.5 text-[19px] leading-6 italic [text-shadow:1px_1px_2px_#133d13]">开始</span>
      </button>
      <div className="flex flex-1 items-center pt-0.5 pl-[3px]">
        <button type="button" aria-label="Quick launch" className="mr-1 flex h-6 w-[42px] items-center justify-center rounded-sm border border-[#3c80e8] bg-[#1e55c8]">
          <svg width="17" height="17" viewBox="0 0 17 17" fill="none" strokeWidth="4" strokeLinecap="round">
            <path d="M7 3Q2 2 3 6Q4 8 6 7" stroke="#f0c020" />
            <path d="M10 3Q15 2 14 7L10 6" stroke="#70b0f0" />
            <path d="M4 11Q2 15 7 14" stroke="#60b840" />
            <path d="M11 10Q15 10 14 13L10 14" stroke="#e85840" />
          </svg>
        </button>
        <div className="flex gap-0.5">
          <button type="button" className={`${task} bg-[#3c81f3] shadow-[inset_-1px_-1px_2px_#1c4fb5]`}>
            <svg width="17" height="17" viewBox="0 0 17 17"><circle cx="8.500" cy="8.500" r="8" fill="#f8d020" /><circle cx="8.500" cy="8.500" r="5.500" fill="#1f8f2f" /><path d="M8.500 5V12M5 8.500H12" stroke="#ffe040" strokeWidth="2" /></svg>
            <span className="ml-[3px]"><Mixed text="360安全卫士" latin={small} /></span>
          </button>
          <button type="button" className={`${task} bg-[#3c81f3] shadow-[inset_-1px_-1px_2px_#1c4fb5]`}>
            <svg width="15" height="15" viewBox="0 0 15 15"><circle cx="7.500" cy="7.500" r="7.500" fill="#d8f0d0" /><path d="M3.500 8H11.500Q11 4 7.500 4Q4 4 4 8Q4.500 11 8 11Q10 11 11 10" fill="none" stroke="#40a840" strokeWidth="2" /></svg>
            <span className="ml-[5px]"><Mixed text="360导航_一个主页..." latin={small} /></span>
          </button>
          <button type="button" className={`${task} bg-[#1c4fb8] pl-3 shadow-[inset_1px_1px_2px_#0f3280]`}>
            <AppLogo />
            <span className={`ml-1 ${small}`}>Untitled - JDPai...</span>
          </button>
        </div>
      </div>
      <svg width="13" height="15" viewBox="0 0 13 15" className="mt-2 mr-3 shrink-0"><path d="M0 0H13V15H5L0 10Z" fill="#e8f2fc" /><path d="M11 2L6 8" stroke="#2c6fb8" /><circle cx="6" cy="8" r="2" fill="#2c6fb8" /></svg>
      <div className="relative flex w-[77px] items-center border-l border-[#0fb8f8] bg-[linear-gradient(#0c8ae0,#18b4f4_10%,#1290e8_30%,#109af0_80%,#0a68c0)] pl-[9px]">
        <button type="button" aria-label="Show hidden icons" className="absolute top-[7px] -left-[9px] flex h-4 w-4 items-center justify-center rounded-full border border-[#7cc8f8] bg-[#1478e0]">
          <svg width="7" height="8" viewBox="0 0 7 8" fill="none" stroke="#fff" strokeWidth="2"><path d="M5.500 0.500L2 4L5.500 7.500" /></svg>
        </button>
        <svg width="15" height="15" viewBox="0 0 15 15" aria-hidden="true">
          <path d="M5 1H14V9H5Z" fill="#202858" stroke="#b0b8d8" />
          <path d="M1 5H9V12H1Z" fill="#303868" stroke="#c0c8e0" />
          <path d="M2 14H9M10 11H13" stroke="#d0d8e8" strokeWidth="2" />
        </svg>
        <time className={`ml-2 ${small}`}>10:43</time>
      </div>
    </footer>
  );
}

function ImeBar() {
  return (
    <div className="absolute top-[574px] right-0 flex h-[25px] w-[156px] items-center justify-between border border-r-0 border-[#bcc4cf] bg-white pr-2 pl-1.5 text-[#2f74f5]">
      <svg width="16" height="16" viewBox="0 0 16 16"><rect x=".5" y=".5" width="15" height="15" rx="1" fill="#eef4ff" stroke="#2f74f5" /><path d="M0 9L7 16H0Z" fill="#2f74f5" /><path d="M14 2L8 8" stroke="#2f74f5" /><circle cx="8" cy="8" r="2" fill="#2f74f5" /></svg>
      <span className="text-[15px] leading-5 font-bold">中</span>
      <svg width="14" height="14" viewBox="0 0 14 14"><path d="M9 0Q15 4 13 9Q10 14 5 13Q1 12 0 9Q6 10 8 6Q10 3 9 0Z" fill="#2f74f5" /></svg>
      <svg width="13" height="14" viewBox="0 0 13 14" fill="#2f74f5"><circle cx="3.500" cy="3.500" r="2.300" fill="none" stroke="#2f74f5" strokeWidth="1.800" /><path d="M10 6Q13 6 13 9Q12 13 8 13L10 11Q7 11 7 8.500Q7.500 6 10 6Z" /></svg>
      <svg width="14" height="14" viewBox="0 0 14 14" fill="#8fb4fa"><circle cx="7" cy="4" r="3.500" /><path d="M0 13Q1 9 7 9Q13 9 14 13Z" /></svg>
      <svg width="15" height="15" viewBox="0 0 15 15" fill="none" stroke="#2f74f5" strokeWidth="2"><circle cx="7.500" cy="7.500" r="4" /><path d="M7.500 0V3M7.500 12V15M0 7.500H3M12 7.500H15M2 2L4.500 4.500M10.500 10.500L13 13M13 2L10.500 4.500M4.500 10.500L2 13" /></svg>
    </div>
  );
}

export default function App() {
  return (
    <div className="relative flex h-screen flex-col overflow-hidden bg-[#ece9d8] font-['Noto_Sans_CJK_SC',sans-serif] text-[12px] leading-4 text-black">
      <TitleBar />
      <TopBars />
      <main className="flex min-h-0 flex-1 border-t border-[#aca899] pt-px shadow-[inset_0_1px_#fff]">
        <LeftBar />
        <div className="w-px shrink-0 bg-white" />
        <Viewport />
        <SidePanel />
        <Palette />
      </main>
      <SnapBar />
      <StatusBar />
      <Taskbar />
      <ImeBar />
      <div className="absolute top-[395px] right-[2px] flex h-[59px] w-[9px] flex-col items-center justify-end rounded border border-[#ffffff66] bg-black/60 pb-0.5">
        <span className="h-[3px] w-[5px] border-y border-[#30e050]" />
      </div>
    </div>
  );
}
